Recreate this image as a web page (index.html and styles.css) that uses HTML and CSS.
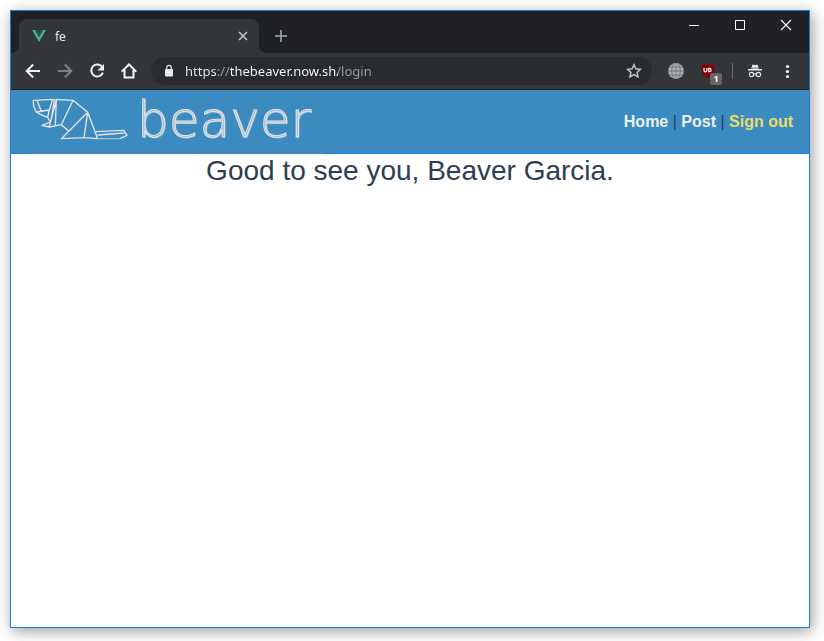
FILE: index.html
```html
<!DOCTYPE html>
<html lang="en">
<head>
<meta charset="utf-8">
<meta name="viewport" content="width=device-width, initial-scale=1">
<title>fe</title>
<link rel="stylesheet" href="styles.css">
</head>
<body>
<div class="window">
  <div class="tabstrip">
    <div class="tab">
      <svg class="favicon" viewBox="0 0 16 16" aria-hidden="true"><path fill="#41b883" d="M1 2h3l4 7 4-7h3L8 14z"/><path fill="#35495e" d="M4 2h3l1 2 1-2h3L8 9z"/></svg>
      <span class="tab-title">fe</span>
      <button class="icon-btn tab-close" aria-label="Close tab"><svg viewBox="0 0 16 16"><path d="M4 4l8 8M12 4l-8 8" stroke="#c4c7ca" stroke-width="1.6"/></svg></button>
    </div>
    <button class="icon-btn new-tab" aria-label="New tab"><svg viewBox="0 0 16 16"><path d="M8 2v12M2 8h12" stroke="#a5a8ab" stroke-width="1.6"/></svg></button>
    <div class="caption">
      <button aria-label="Minimize"><svg viewBox="0 0 12 12"><path d="M1 6.500h10" stroke="#fff"/></svg></button>
      <button aria-label="Maximize"><svg viewBox="0 0 12 12"><path d="M1.500 1.500h9v9h-9z" fill="none" stroke="#fff"/></svg></button>
      <button aria-label="Close"><svg viewBox="0 0 12 12"><path d="M1 1l10 10M11 1L1 11" stroke="#fff" stroke-width="1.100"/></svg></button>
    </div>
  </div>
  <div class="toolbar">
    <div class="nav-buttons">
      <button class="icon-btn" aria-label="Back"><svg viewBox="0 0 16 16"><path d="M15 8H2M8.200 1.500L1.700 8l6.500 6.500" fill="none" stroke="#f1f3f4" stroke-width="2"/></svg></button>
      <button class="icon-btn" aria-label="Forward"><svg viewBox="0 0 16 16"><path d="M1 8h13M7.800 1.500L14.300 8l-6.500 6.500" fill="none" stroke="#808386" stroke-width="2"/></svg></button>
      <button class="icon-btn" aria-label="Reload"><svg viewBox="0 0 16 16"><path d="M13.400 4.300A6 6 0 1 0 13.900 9.600" fill="none" stroke="#f1f3f4" stroke-width="2"/><path d="M15 1v6.500H8.500z" fill="#f1f3f4"/></svg></button>
      <button class="icon-btn" aria-label="Home page"><svg viewBox="0 0 16 16"><path d="M.7 8.600L8 1.500l7.300 7.100M3.500 6.500v8h9v-8" fill="none" stroke="#f1f3f4" stroke-width="2"/></svg></button>
    </div>
    <div class="omnibox">
      <svg class="lock" viewBox="0 0 16 16" aria-hidden="true"><rect x="4" y="6" width="8" height="7.500" rx="1" fill="#e8eaed"/><path d="M5.700 7V4.600a2.300 2.300 0 0 1 4.600 0V7" fill="none" stroke="#e8eaed" stroke-width="1.200"/></svg>
      <input class="address" type="text" aria-label="Address" value="https://thebeaver.now.sh/login" spellcheck="false">
      <button class="icon-btn" aria-label="Bookmark"><svg viewBox="0 0 16 16"><path d="M8 1.700l1.900 4.100 4.500.5-3.300 3.100.9 4.500L8 11.600l-4 2.300.9-4.500L1.600 6.300l4.500-.5z" fill="none" stroke="#c4c7ca" stroke-width="1.500"/></svg></button>
    </div>
    <div class="extensions">
      <button class="icon-btn" aria-label="Translate"><svg viewBox="0 0 16 16"><circle cx="8" cy="8" r="7.900" fill="#b2b3b3"/><path d="M8 0v16M0 8h16M1.700 4h12.600M1.700 12h12.600M5.500.8Q2 8 5.500 15.200M10.500.8Q14 8 10.500 15.200" fill="none" stroke="#6c6f71" stroke-width=".9"/></svg></button>
      <button class="icon-btn blocker" aria-label="Content blocker"><svg viewBox="0 0 16 16"><path d="M8 .5c2 1.300 4 1.600 6.500 1.600 0 6.500-.5 10-6.500 13.400C2 12.100 1.500 8.600 1.500 2.100 4 2.100 6 1.800 8 .5z" fill="#800000" stroke="#5b2020"/><path d="M4 5v2.500a1.400 1.400 0 0 0 2.900 0V5M8.800 5.500v3M8.300 5.400h1.500a1.700 1.700 0 0 1 0 3.300H8.300" fill="none" stroke="#fff" stroke-width="1.200"/></svg><span class="badge">1</span></button>
      <span class="divider"></span>
      <button class="icon-btn" aria-label="Incognito"><svg viewBox="0 0 16 16"><path d="M4.500 4.800L5.500 1.500l2.500.7 2.500-.7 1 3.300zM1 6h14v1.500H1z" fill="#e8eaed"/><path d="M4 5h8v1H4z" fill="#9b9ea0"/><circle cx="4.600" cy="11.500" r="2.200" fill="none" stroke="#e8eaed" stroke-width="1.200"/><circle cx="11.400" cy="11.500" r="2.200" fill="none" stroke="#e8eaed" stroke-width="1.200"/><path d="M6.800 11.200q1.200-.8 2.400 0" fill="none" stroke="#e8eaed"/></svg></button>
      <button class="icon-btn" aria-label="Menu"><svg viewBox="0 0 16 16" fill="#f1f3f4"><circle cx="8.500" cy="3.500" r="1.600"/><circle cx="8.500" cy="8.500" r="1.600"/><circle cx="8.500" cy="13.500" r="1.600"/></svg></button>
    </div>
  </div>
  <header class="site-header">
    <a class="logo" href="#">
      <svg class="beaver" viewBox="0 0 108 64" aria-hidden="true"><g transform="translate(-7 0) scale(.3333)" fill="none" stroke="#e6e4e4" stroke-width="4" stroke-linejoin="round"><path d="M98 28L40 31l1 17 8 18 14 8 20 8 8 14M52 33l11 29h24M49 66l39-6M98 28L87 63l-4 19M99 28l10 3-18 65-3 15M109 31l-3 75M103 32L94 88M91 96l-25 10 22 5 36-7M109 28l50 3-35 73 23 20M159 31l44 36-79 79 68-3 41 3M203 67l-11 77M203 67l30 79M228 125l83-4 10 15-21 10M233 135l80-6"/><path d="M233 146h67" stroke="#a3bdd4"/></g></svg>
      <span class="wordmark">beaver</span>
    </a>
    <nav class="site-nav"><a href="#">Home</a> | <a href="#">Post</a> | <a class="active" href="#">Sign out</a></nav>
  </header>
  <main class="page">
    <h1>Good to see you, Beaver Garcia.</h1>
  </main>
</div>
</body>
</html>
```

FILE: styles.css
```css
* { box-sizing: border-box; }

body {
  margin: 0;
  padding: 10px 14px 13px 10px;
  min-height: 100vh;
  display: flex;
  background: #fff;
  font-family: "Open Sans", "Noto Sans", sans-serif;
}

button {
  padding: 0;
  border: 0;
  background: none;
  display: grid;
  place-items: center;
}

.window {
  flex: 1;
  min-width: 0;
  display: flex;
  flex-direction: column;
  border: 1px solid #1b7fd1;
  background: #fff;
  box-shadow: 2px 3px 14px rgba(0, 0, 0, .4);
}

.tabstrip {
  height: 42px;
  display: flex;
  align-items: flex-end;
  padding-left: 8px;
  background: #202124;
}

.tab {
  position: relative;
  width: 240px;
  height: 34px;
  display: flex;
  align-items: center;
  gap: 8px;
  padding: 0 8px 0 12px;
  border-radius: 8px 8px 0 0;
  background: #323639;
  color: #f1f3f4;
  font-size: 12px;
}

.tab::before,
.tab::after {
  content: "";
  position: absolute;
  bottom: 0;
  width: 8px;
  height: 8px;
}

.tab::before {
  right: 100%;
  background: radial-gradient(circle at 0 0, #202124 8px, #323639 8px);
}

.tab::after {
  left: 100%;
  background: radial-gradient(circle at 100% 0, #202124 8px, #323639 8px);
}

.favicon,
.lock,
.icon-btn svg {
  width: 16px;
  height: 16px;
  flex: none;
}

.tab-title { flex: 1; }

.icon-btn {
  position: relative;
  width: 16px;
  height: 16px;
  flex: none;
}

.new-tab { margin: 0 0 9px 14px; }

.caption {
  align-self: flex-start;
  display: flex;
  margin-left: auto;
}

.caption button {
  width: 46px;
  height: 28px;
}

.caption svg {
  width: 12px;
  height: 12px;
}

.toolbar {
  height: 37px;
  display: flex;
  align-items: center;
  padding: 0 14px;
  border-bottom: 1px solid #202124;
  background: #323639;
}

.nav-buttons {
  display: flex;
  gap: 16px;
  margin-right: 14px;
}

.omnibox {
  flex: 1;
  min-width: 0;
  height: 28px;
  display: flex;
  align-items: center;
  padding: 0 10px;
  border-radius: 14px;
  background: #282c2f;
}

.address {
  flex: 1;
  min-width: 0;
  margin-left: 8px;
  padding: 0;
  border: 0;
  outline: 0;
  font: 13px "Noto Sans", "Open Sans", sans-serif;
  color: transparent;
  background: linear-gradient(90deg, #e8eaed 33px, #9aa0a6 33px 45px, #fff 45px 153px, #9aa0a6 153px);
  background-clip: text;
  -webkit-background-clip: text;
}

.extensions {
  display: flex;
  align-items: center;
  gap: 16px;
  margin-left: 16px;
}

.divider {
  width: 1px;
  height: 16px;
  background: #6b6e71;
}

.extensions .divider { margin: 0 -2px 0 0; }

.badge {
  position: absolute;
  left: 10px;
  top: 10px;
  width: 12px;
  height: 12px;
  border-radius: 2px;
  background: #666;
  color: #fff;
  font: bold 9px/12px "Open Sans", sans-serif;
  text-align: center;
}

.site-header {
  display: flex;
  align-items: center;
  justify-content: space-between;
  padding: 0 16px;
  background: #3b8bc0;
  box-shadow: inset 0 -1px #1a7fdf;
  font-family: "Liberation Sans", Arial, sans-serif;
}

.logo {
  width: 296px;
  height: 64px;
  display: flex;
  align-items: flex-start;
  background: #3b8bc0;
  text-decoration: none;
}

.beaver {
  width: 108px;
  height: 64px;
  flex: none;
}

.wordmark {
  margin-left: 2px;
  font: 200 50px/60px "DejaVu Sans", sans-serif;
  color: rgba(230, 228, 228, .45);
  -webkit-text-stroke: 1px #e6e4e4;
  text-shadow: 1px 1px 1px rgba(230, 228, 228, .45);
}

.site-nav {
  font-size: 16px;
  line-height: 20px;
  color: #2c3e50;
  white-space: nowrap;
}

.site-nav a {
  color: #ecf0f1;
  font-weight: bold;
  text-decoration: none;
}

.site-nav .active { color: #e8dc6c; }

.page {
  flex: 1;
  text-align: center;
}

.page h1 {
  margin: 0;
  font: 28px/34px "Liberation Sans", Arial, sans-serif;
  color: #2c3e50;
}
```
